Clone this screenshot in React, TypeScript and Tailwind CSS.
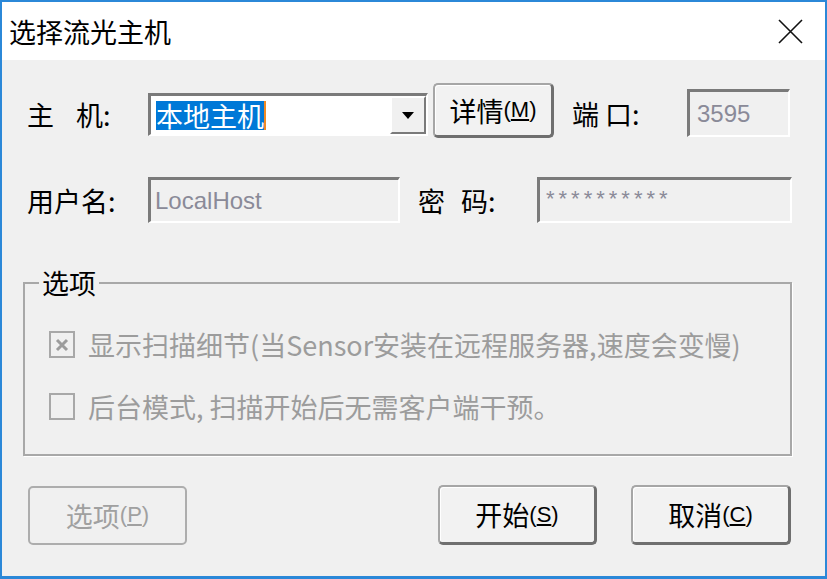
import React from 'react';

const Sunken = ({ className = '', children }: { className?: string; children?: React.ReactNode }) => (
  <div
    className={`border-t-[3px] border-l-[3px] border-b-2 border-r-2 border-t-[#7a7a7a] border-l-[#7a7a7a] border-b-white border-r-white ${className}`}
  >
    {children}
  </div>
);

const RaisedButton = ({ label, hotkey, className = '' }: { label: string; hotkey: string; className?: string }) => (
  <button
    className={`flex items-center justify-center rounded-[5px] border-2 border-[#a6a6a6] border-b-[3px] border-r-[3px] border-b-[#6f6f6f] border-r-[#6f6f6f] bg-[#f2f2f2] shadow-[inset_1px_1px_0_#fff] text-black ${className}`}
  >
    <span className="text-[27px] leading-none">{label}</span>
    <span className="font-['Liberation_Sans',sans-serif] text-[22px] leading-none">
      (<u>{hotkey}</u>)
    </span>
  </button>
);

const CheckBox = ({ checked }: { checked?: boolean }) => (
  <div className="flex h-[27px] w-[26px] shrink-0 items-center justify-center border-2 border-[#a8a8a8] bg-[#f0f0f0]">
    {checked && (
      <svg width="14" height="14" viewBox="0 0 14 14">
        <path d="M2 2L12 12M12 2L2 12" stroke="#9c9c9c" strokeWidth="3" />
      </svg>
    )}
  </div>
);

export default function App() {
  return (
    <div className="flex h-[579px] w-[827px] flex-col border-t-2 border-l-2 border-r-2 border-b-[3px] border-[#2b88d8] bg-[#f0f0f0] font-['Noto_Sans_CJK_SC',sans-serif] text-black">
      {/* title bar */}
      <div className="flex h-[58px] shrink-0 items-center justify-between bg-white pl-[7px] pr-[22px]">
        <span className="text-[27px] leading-none">选择流光主机</span>
        <svg width="25" height="25" viewBox="0 0 25 25">
          <path d="M1 1L24 24M24 1L1 24" stroke="#111" strokeWidth="1.6" />
        </svg>
      </div>

      {/* host row */}
      <div className="mt-[23px] flex h-[56px] items-start">
        <div className="ml-[25px] mt-[10px] flex h-[43px] w-[121px] items-center text-[27px] leading-none">
          <span>主</span>
          <span className="ml-[22px]">机:</span>
        </div>
        <Sunken className="mt-[10px] flex h-[43px] w-[280px]">
          <div className="flex flex-1 items-center bg-white pl-[5px]">
            <span className="flex h-[29px] items-center bg-[#0078d7] text-[27px] leading-none text-white">本地主机</span>
            <span className="h-[29px] w-[2px] bg-[#f08a24]" />
          </div>
          <div className="flex w-[36px] items-center justify-center border-t-2 border-l-2 border-b-2 border-r-2 border-t-white border-l-white border-b-[#7a7a7a] border-r-[#7a7a7a] bg-[#f0f0f0]">
            <svg width="12" height="7" viewBox="0 0 12 7">
              <path d="M0 0H12L6 7Z" fill="#000" />
            </svg>
          </div>
        </Sunken>
        <RaisedButton label="详情" hotkey="M" className="ml-[5px] h-[55px] w-[121px]" />
        <div className="ml-[18px] mt-[6px] flex h-[48px] w-[115px] items-center text-[27px] leading-none">
          <span>端</span>
          <span className="ml-[6px]">口:</span>
        </div>
        <Sunken className="mt-[6px] flex h-[48px] w-[103px] items-center pl-[7px]">
          <span className="font-['Liberation_Sans',sans-serif] text-[24px] leading-none text-[#8a8a98]">3595</span>
        </Sunken>
      </div>

      {/* user row */}
      <div className="mt-[38px] flex h-[46px] items-center">
        <div className="ml-[25px] w-[121px] text-[27px] leading-none">用户名:</div>
        <Sunken className="flex h-[46px] w-[252px] items-center pl-[4px]">
          <span className="font-['Liberation_Sans',sans-serif] text-[24px] leading-none text-[#8a8a98]">LocalHost</span>
        </Sunken>
        <div className="ml-[18px] flex w-[119px] items-center text-[27px] leading-none">
          <span>密</span>
          <span className="ml-[16px]">码:</span>
        </div>
        <Sunken className="flex h-[46px] w-[255px] items-start pl-[6px] pt-[8px]">
          <span className="font-['Liberation_Sans',sans-serif] text-[22px] leading-none tracking-[4px] text-[#8a8a98]">**********</span>
        </Sunken>
      </div>

      {/* options group */}
      <fieldset className="ml-[21px] mr-[33px] mt-[46px] h-[187px] border-2 border-[#a8a8a8] pl-[24px] shadow-[1px_1px_0_#fff]">
        <legend className="-ml-[10px] px-[3px] text-[27px] leading-none">选项</legend>
        <div className="mt-[35px] flex items-center">
          <CheckBox checked />
          <span className="ml-[13px] text-[27px] leading-none text-[#9c9c9c]">显示扫描细节(当Sensor安装在远程服务器,速度会变慢)</span>
        </div>
        <div className="mt-[35px] flex items-center">
          <CheckBox />
          <span className="ml-[13px] text-[27px] leading-none text-[#9c9c9c]">后台模式, 扫描开始后无需客户端干预。</span>
        </div>
      </fieldset>

      {/* buttons */}
      <div className="mt-[29px] flex items-center">
        <button className="ml-[26px] flex h-[59px] w-[159px] items-center justify-center rounded-[5px] border-2 border-[#adadad] text-[#a0a0a0]">
          <span className="text-[27px] leading-none">选项</span>
          <span className="font-['Liberation_Sans',sans-serif] text-[22px] leading-none">
            (<u>P</u>)
          </span>
        </button>
        <div className="flex-1" />
        <RaisedButton label="开始" hotkey="S" className="h-[60px] w-[159px]" />
        <RaisedButton label="取消" hotkey="C" className="ml-[34px] mr-[34px] h-[60px] w-[160px]" />
      </div>
    </div>
  );
}
